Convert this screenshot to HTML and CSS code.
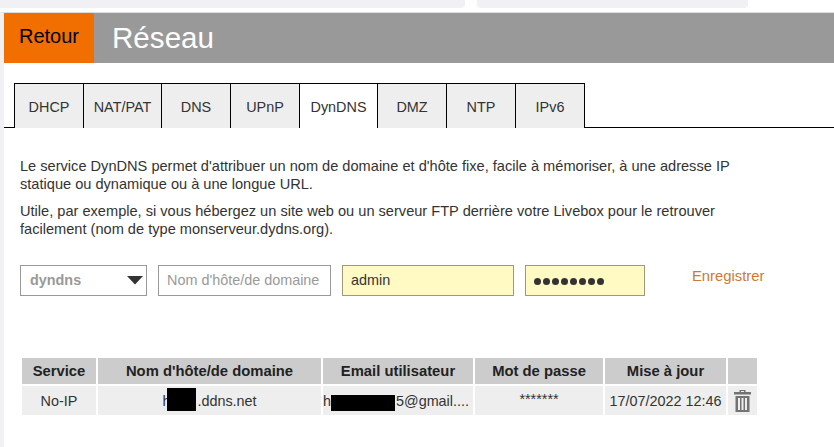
FILE: index.html
```html
<!DOCTYPE html>
<html lang="fr">
<head>
  <meta charset="UTF-8">
  <title>Réseau</title>
  <link rel="stylesheet" href="styles.css">
</head>
<body>

  <div class="topstrip">
    <div class="strip-a"></div>
    <div class="strip-b"></div>
  </div>

  <div class="page">
    <div class="header">
      <a class="back">Retour</a>
      <h1>Réseau</h1>
    </div>

    <ul class="tabs">
      <li class="tab t-dhcp">DHCP</li>
      <li class="tab t-nat">NAT/PAT</li>
      <li class="tab t-dns">DNS</li>
      <li class="tab t-upnp">UPnP</li>
      <li class="tab t-dyn active">DynDNS</li>
      <li class="tab t-dmz">DMZ</li>
      <li class="tab t-ntp">NTP</li>
      <li class="tab t-ipv6">IPv6</li>
    </ul>

    <div class="content">
      <p class="intro">Le service DynDNS permet d'attribuer un nom de domaine et d'hôte fixe, facile à mémoriser, à une adresse IP statique ou dynamique ou à une longue URL.</p>
      <p class="intro">Utile, par exemple, si vous hébergez un site web ou un serveur FTP derrière votre Livebox pour le retrouver facilement (nom de type monserveur.dydns.org).</p>

      <div class="form">
        <div class="field select">
          <span>dyndns</span>
          <svg class="arrow" width="16" height="9" viewBox="0 0 16 9"><path d="M0 0h16L8 8.500z" fill="#333"/></svg>
        </div>
        <div class="field host">Nom d'hôte/de domaine</div>
        <div class="field user">admin</div>
        <div class="field pass">
          <i></i><i></i><i></i><i></i><i></i><i></i><i></i><i></i>
        </div>
        <a class="save">Enregistrer</a>
      </div>

      <div class="table">
        <div class="th">Service</div>
        <div class="th">Nom d'hôte/de domaine</div>
        <div class="th">Email utilisateur</div>
        <div class="th">Mot de passe</div>
        <div class="th">Mise à jour</div>
        <div class="th"></div>

        <div class="td">No-IP</div>
        <div class="td"><span>h<b class="mask m-host"></b>.ddns.net</span></div>
        <div class="td left"><span>h<b class="mask m-mail"></b>5@gmail....</span></div>
        <div class="td stars">*******</div>
        <div class="td">17/07/2022 12:46</div>
        <div class="td">
          <svg width="17" height="22" viewBox="0 0 17 22" fill="#737373">
            <path d="M5.500 0h6v2H17v2.500H0V2h5.500zM7 1v1h3V1z" fill-rule="evenodd"/>
            <path d="M1.500 6h14v16h-14zM4 8v12h2V8zM7.500 8v12h2V8zM11 8v12h2V8z" fill-rule="evenodd"/>
          </svg>
        </div>
      </div>
    </div>
  </div>

</body>
</html>
```

FILE: styles.css
```css
* {
  box-sizing: border-box;
}

body {
  margin: 0;
  height: 447px;
  overflow: hidden;
  background: #fff;
  font-family: "Liberation Sans", Arial, sans-serif;
  color: #333;
}

.topstrip {
  display: flex;
  gap: 12px;
  height: 12px;
  padding-bottom: 4px;
  background: #fff;
}

.strip-a {
  width: 465px;
  background: #f0f0f5;
  border-radius: 0 0 4px 0;
}

.strip-b {
  width: 271px;
  background: #f0f0f5;
  border-radius: 0 0 4px 4px;
}

.page {
  border-left: 4px solid #f0f0f5;
  border-top: 1px solid #ddd;
  height: 435px;
}

.header {
  display: flex;
  align-items: center;
  height: 50px;
  background: #999;
}

.back {
  width: 90px;
  height: 50px;
  line-height: 47px;
  text-align: center;
  background: #f16e00;
  color: #000;
  font-size: 20px;
}

h1 {
  margin: 0 0 0 18px;
  font-size: 29.6px;
  font-weight: normal;
  color: #fff;
}

.tabs {
  display: flex;
  list-style: none;
  margin: 20px 0 0;
  padding: 0 0 0 10px;
  height: 45px;
  border-bottom: 1px solid #000;
}

.tab {
  height: 45px;
  line-height: 46px;
  text-align: center;
  font-size: 14.4px;
  background: #eee;
  border-top: 1px solid #000;
  border-left: 1px solid #000;
}

.t-ipv6 {
  border-right: 1px solid #000;
}

.active {
  background: #fff;
}

.t-dhcp { width: 69px; }
.t-nat { width: 78px; }
.t-dns { width: 69px; }
.t-upnp { width: 69px; }
.t-dyn { width: 78px; }
.t-dmz { width: 69px; }
.t-ntp { width: 69px; }
.t-ipv6 { width: 70px; }

.content {
  padding: 29px 0 0 16px;
}

.intro {
  margin: 0 0 9px;
  width: 730px;
  font-size: 14.6px;
  line-height: 18px;
}

.form {
  display: flex;
  align-items: flex-start;
  margin-top: 27px;
}

.field {
  height: 31px;
  line-height: 29px;
  border: 1px solid #999;
  font-size: 14.4px;
  padding-left: 8px;
}

.select {
  display: flex;
  align-items: center;
  justify-content: space-between;
  width: 127px;
  padding-left: 9px;
  padding-right: 3px;
  color: #999;
  font-weight: bold;
}

.host {
  width: 173px;
  margin-left: 11px;
  color: #999;
  white-space: nowrap;
}

.user {
  width: 172px;
  margin-left: 11px;
  background: #fff9c4;
  border-color: #a09878;
}

.pass {
  display: flex;
  align-items: center;
  gap: 2px;
  width: 120px;
  margin-left: 11px;
  background: #fff9c4;
  border-color: #a09878;
}

.pass i {
  width: 7px;
  height: 7px;
  margin-top: 2px;
  border-radius: 50%;
  background: #333;
}

.save {
  margin: 2px 0 0 47px;
  font-size: 14.8px;
  line-height: 18px;
  color: #cc7a33;
}

.table {
  display: grid;
  grid-template-columns: 74px 223px 150px 128px 121px 29px;
  grid-template-rows: 26px 29px;
  gap: 2px;
  margin: 62px 0 0 2px;
}

.th, .td {
  display: flex;
  align-items: center;
  justify-content: center;
  font-size: 14.4px;
  white-space: nowrap;
}

.th {
  background: #ccc;
  font-size: 14.8px;
  font-weight: bold;
  color: #222;
}

.td {
  background: #eee;
}

.left {
  justify-content: flex-start;
}

.mask {
  display: inline-block;
  background: #000;
}

.m-host {
  width: 29px;
  height: 23px;
  margin: -4px 1px -4px -3px;
  vertical-align: -1px;
}

.m-mail {
  width: 64px;
  height: 16px;
  margin: -3px 1px -3px 0;
  vertical-align: -2px;
}

.stars {
  padding-bottom: 3px;
}
```
